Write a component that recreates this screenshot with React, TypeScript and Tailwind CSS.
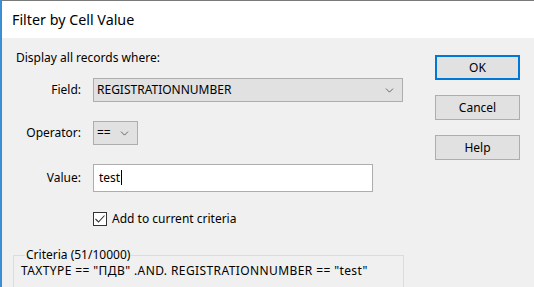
import { ChevronDown } from "lucide-react";

const font = "[font-family:'Segoe_UI','Noto_Sans',sans-serif]";

function Combo({ text, className }: { text: string; className: string }) {
  return (
    <div
      className={`${className} flex items-center justify-between border border-[#adadad] bg-[#e1e1e1] pl-[3px] pr-[6px] text-[12px] text-black`}
    >
      <span>{text}</span>
      <ChevronDown size={13} strokeWidth={1.3} className="text-[#333]" />
    </div>
  );
}

function Button({ label, active }: { label: string; active?: boolean }) {
  return (
    <button
      className={`flex h-[25px] w-[85px] shrink-0 items-center justify-center bg-[#e1e1e1] text-[12px] text-black ${
        active ? "border-2 border-[#0078d7]" : "border border-[#adadad]"
      }`}
    >
      {label}
    </button>
  );
}

export default function App() {
  return (
    <div className={`${font} flex h-[287px] w-[534px] overflow-hidden`}>
      {/* window edge behind */}
      <div className="w-[1px] shrink-0 bg-[#3d8fd6]" />
      <div className="flex flex-1 flex-col border-l border-t border-[#7a7a7a]">
        {/* title bar */}
        <div className="flex h-[37px] shrink-0 items-center bg-white pl-[10px] pt-[1px] text-[14.3px] text-black">
          Filter by Cell Value
        </div>

        {/* body */}
        <div className="flex min-h-0 flex-1 overflow-hidden bg-[#f0f0f0]">
          <div className="flex w-[420px] shrink-0 flex-col pl-[14px] text-[12px] text-black">
            <div className="mt-[12px] h-[16px] shrink-0 leading-[16px]">Display all records where:</div>

            <div className="mt-[12px] flex shrink-0 items-center">
              <span className="w-[65px] text-right">Field:</span>
              <Combo text="REGISTRATIONNUMBER" className="ml-[12px] h-[24px] w-[310px]" />
            </div>

            <div className="mt-[19px] flex shrink-0 items-center">
              <span className="w-[65px] text-right">Operator:</span>
              <Combo text="==" className="ml-[12px] h-[24px] w-[45px]" />
            </div>

            <div className="mt-[19px] flex shrink-0 items-center">
              <span className="w-[65px] text-right">Value:</span>
              <div className="ml-[12px] flex h-[28px] w-[280px] items-center border border-[#adadad] bg-white pb-[1px] pl-[5px]">
                test<span className="ml-[1px] h-[15px] w-[1px] bg-black" />
              </div>
            </div>

            <label className="ml-[77px] mt-[18px] flex shrink-0 items-center">
              <span className="flex h-[14px] w-[14px] items-center justify-center border border-[#333] bg-white">
                <svg width="12" height="12" viewBox="0 0 12 12">
                  <path d="M1.5 6 L4.5 9 L10.5 2.5" fill="none" stroke="#333" strokeWidth="1.1" />
                </svg>
              </span>
              <span className="ml-[5px]">Add to current criteria</span>
            </label>

            <fieldset className="ml-[-3px] mt-[20px] h-[60px] w-[391px] shrink-0 border border-[#dcdcdc] pl-[7px]">
              <legend className="ml-[4px] px-[1px] leading-[14px]">Criteria (51/10000)</legend>
              <div className="mt-[2px] leading-[14px] tracking-[0.4px]">
                TAXTYPE == "ПДВ" .AND. REGISTRATIONNUMBER == "test"
              </div>
            </fieldset>
          </div>

          <div className="ml-[13px] flex flex-col gap-[15px] pt-[17px]">
            <Button label="OK" active />
            <Button label="Cancel" />
            <Button label="Help" />
          </div>
        </div>
      </div>
    </div>
  );
}
